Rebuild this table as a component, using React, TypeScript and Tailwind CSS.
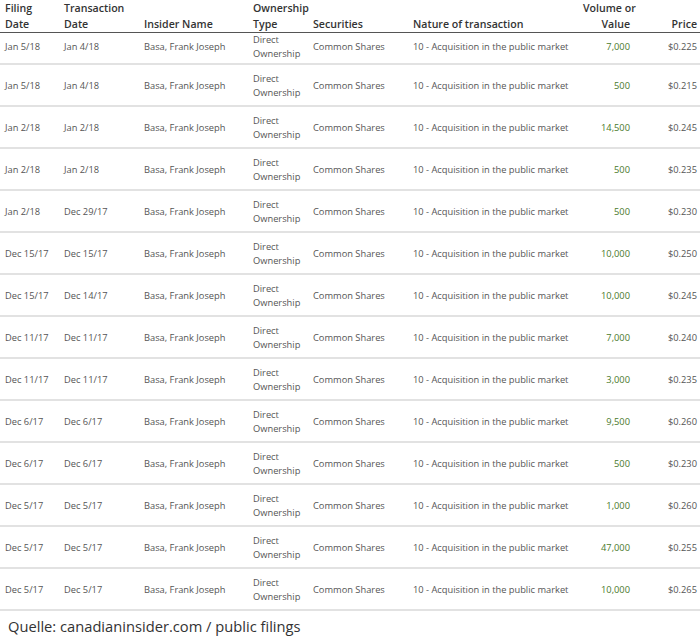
import React from 'react';

type Row = {
  filing: string;
  trans: string;
  volume: string;
  price: string;
};

const rows: Row[] = [
  { filing: 'Jan 5/18', trans: 'Jan 4/18', volume: '7,000', price: '$0.225' },
  { filing: 'Jan 5/18', trans: 'Jan 4/18', volume: '500', price: '$0.215' },
  { filing: 'Jan 2/18', trans: 'Jan 2/18', volume: '14,500', price: '$0.245' },
  { filing: 'Jan 2/18', trans: 'Jan 2/18', volume: '500', price: '$0.235' },
  { filing: 'Jan 2/18', trans: 'Dec 29/17', volume: '500', price: '$0.230' },
  { filing: 'Dec 15/17', trans: 'Dec 15/17', volume: '10,000', price: '$0.250' },
  { filing: 'Dec 15/17', trans: 'Dec 14/17', volume: '10,000', price: '$0.245' },
  { filing: 'Dec 11/17', trans: 'Dec 11/17', volume: '7,000', price: '$0.240' },
  { filing: 'Dec 11/17', trans: 'Dec 11/17', volume: '3,000', price: '$0.235' },
  { filing: 'Dec 6/17', trans: 'Dec 6/17', volume: '9,500', price: '$0.260' },
  { filing: 'Dec 6/17', trans: 'Dec 6/17', volume: '500', price: '$0.230' },
  { filing: 'Dec 5/17', trans: 'Dec 5/17', volume: '1,000', price: '$0.260' },
  { filing: 'Dec 5/17', trans: 'Dec 5/17', volume: '47,000', price: '$0.255' },
  { filing: 'Dec 5/17', trans: 'Dec 5/17', volume: '10,000', price: '$0.265' },
];

const cols = 'grid grid-cols-[64px_80px_109px_60px_100px_170px_47px_1fr]';

const App = () => {
  return (
    <div className="w-[700px] h-[638px] bg-white overflow-hidden font-['Open_Sans',sans-serif]">
      {/* header */}
      <div className={`${cols} h-[33px] items-end border-b-[1.5px] border-[#555] text-[10.6px] leading-[16px] font-semibold text-[#333] whitespace-nowrap`}>
        <div className="pl-[5px]">Filing<br />Date</div>
        <div>Transaction<br />Date</div>
        <div>Insider Name</div>
        <div>Ownership<br />Type</div>
        <div>Securities</div>
        <div>Nature of transaction</div>
        <div className="text-right">Volume or<br />Value</div>
        <div className="text-right pr-[3px]">Price</div>
      </div>

      {rows.map((r, i) => (
        <div
          key={i}
          className={`${cols} items-center border-b-2 border-[#e2e2e2] text-[9.3px] leading-[14px] text-[#555] whitespace-nowrap overflow-hidden ${
            i === 0 ? 'h-[32px] pb-[9px]' : 'h-[42px] pt-[2px]'
          }`}
        >
          <div className="pl-[5px]">{r.filing}</div>
          <div>{r.trans}</div>
          <div>Basa, Frank Joseph</div>
          <div>Direct<br />Ownership</div>
          <div>Common Shares</div>
          <div>10 - Acquisition in the public market</div>
          <div className="text-right text-[#4a7a2c]">{r.volume}</div>
          <div className="text-right pr-[3px]">{r.price}</div>
        </div>
      ))}

      <div className="pl-[8px] pt-[5px] text-[14.7px] leading-[20px] text-[#333]">
        Quelle: canadianinsider.com / public filings
      </div>
    </div>
  );
};

export default App;
